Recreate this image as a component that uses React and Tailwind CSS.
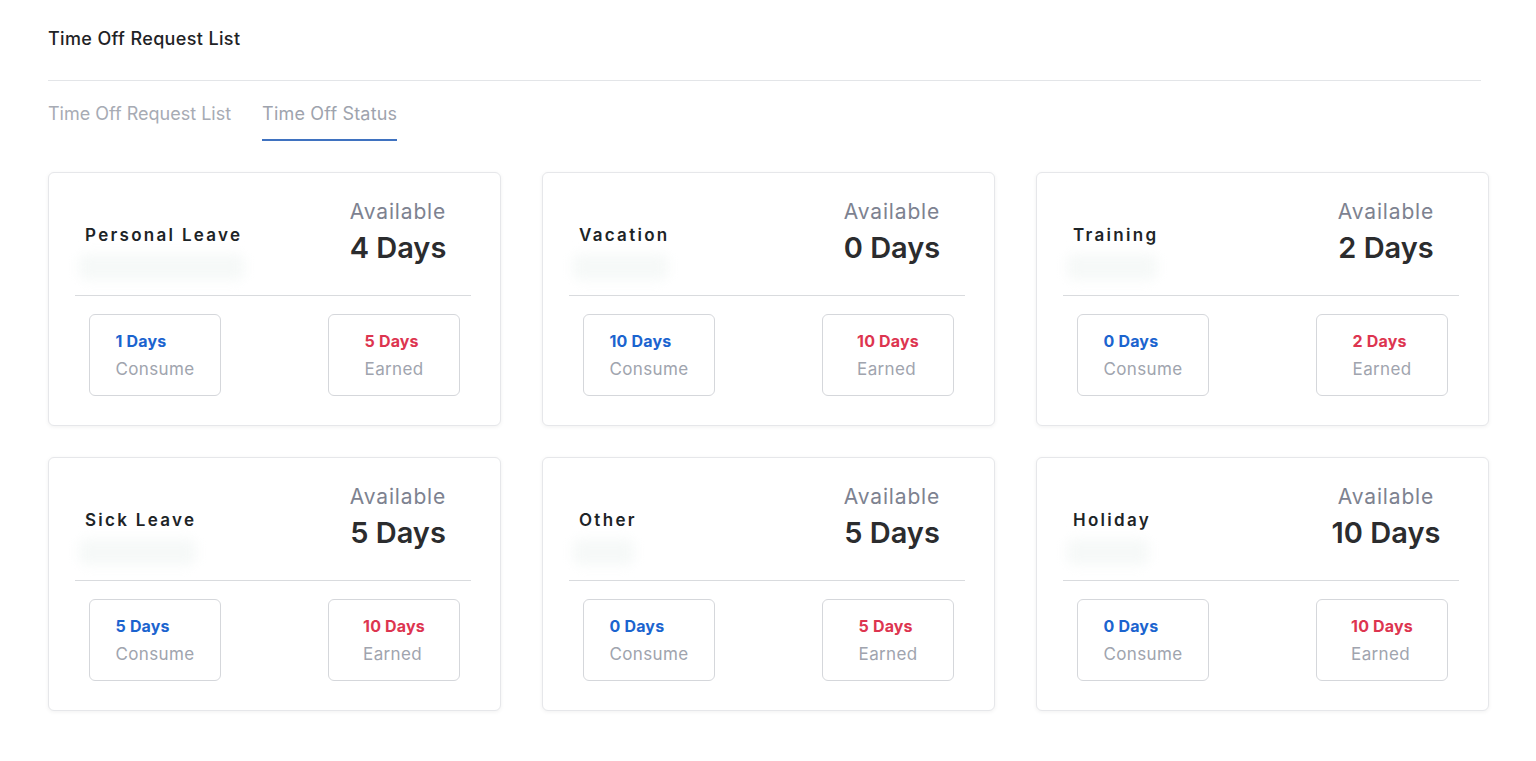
import React from "react";

const leaves = [
  { name: "Personal Leave", available: 4, consume: 1, earned: 5 },
  { name: "Vacation", available: 0, consume: 10, earned: 10 },
  { name: "Training", available: 2, consume: 0, earned: 2 },
  { name: "Sick Leave", available: 5, consume: 5, earned: 10 },
  { name: "Other", available: 5, consume: 0, earned: 5 },
  { name: "Holiday", available: 10, consume: 0, earned: 10 },
];

function StatBox({ value, label, tone }) {
  return (
    <div className="w-[132px] h-[82px] rounded-[6px] border border-[#d5d7db] flex items-center justify-center">
      <div className="text-left">
        <div
          className={
            "text-[16px] leading-[28px] font-bold tracking-[0.01em] " +
            (tone === "blue" ? "text-[#1b64cf]" : "text-[#dd3550]")
          }
        >
          {value} Days
        </div>
        <div className="text-[17px] leading-[28px] tracking-[0.02em] text-[#a0a4ae]">{label}</div>
      </div>
    </div>
  );
}

function LeaveCard({ item }) {
  return (
    <div className="rounded-[6px] border border-[#e6e7ea] bg-white shadow-[0_1px_4px_rgba(0,0,0,0.06)] pl-[26px] pr-[29px] pb-[29px]">
      <div className="h-[122px] flex items-start justify-between pl-[10px] pr-[3px]">
        <div className="mt-[49px]">
          <div className="text-[17px] leading-[26px] font-semibold tracking-[0.135em] text-[#1d2427]">{item.name}</div>
          <div className="mt-[6px] -ml-[6px] h-[26px] w-[105%] rounded-md bg-[#f6f9f8] blur-[6px]" />
        </div>
        <div className="mt-[24px] w-[140px] text-center">
          <div className="text-[21px] leading-[30px] tracking-[0.04em] text-[#7d8290]">Available</div>
          <div className="text-[29px] leading-[42px] font-semibold text-[#2b2c2e]">{item.available} Days</div>
        </div>
      </div>
      <div className="border-t border-[#d9dbde]" />
      <div className="pt-[18px] flex justify-between pl-[14px] pr-[11px]">
        <StatBox value={item.consume} label="Consume" tone="blue" />
        <StatBox value={item.earned} label="Earned" tone="red" />
      </div>
    </div>
  );
}

export default function App() {
  return (
    <div
      className="min-h-screen bg-white pl-[48px] pr-[47px]"
      style={{ fontFamily: "Inter, 'Open Sans', sans-serif" }}
    >
      <div className="pr-[8px]">
        <div className="pt-[25px] pb-[27px] text-[18px] leading-[28px] font-medium tracking-[0.02em] text-[#1f2326]">
          Time Off Request List
        </div>
        <div className="border-t border-[#e3e5e8]" />
      </div>
      <div className="flex gap-[31px] pt-[19px]">
        <div className="text-[18px] leading-[27px] pb-[14px] text-[#a7abb4]">Time Off Request List</div>
        <div className="text-[18px] leading-[27px] pb-[12px] tracking-[0.01em] text-[#9ea3ad] border-b-2 border-[#3f72c0]">
          Time Off Status
        </div>
      </div>
      <div className="grid grid-cols-3 gap-x-[41px] gap-y-[31px] pt-[31px]">
        {leaves.map((l) => (
          <LeaveCard key={l.name} item={l} />
        ))}
      </div>
    </div>
  );
}
